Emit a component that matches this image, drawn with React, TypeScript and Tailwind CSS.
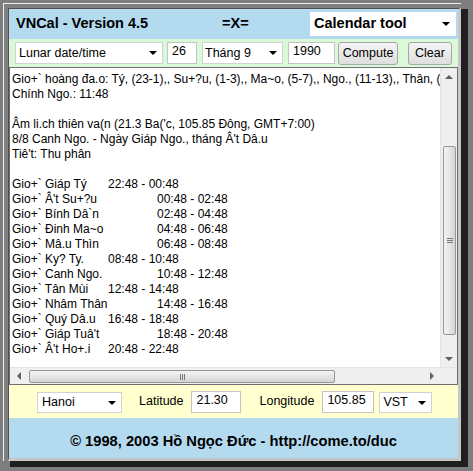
import React from 'react';

const FONT = "font-['Liberation_Sans',Arial,sans-serif]";

function DownArrow({ gray }: { gray?: boolean }) {
  return (
    <span
      className={`inline-block w-0 h-0 border-l-[4px] border-r-[4px] border-t-[4px] border-l-transparent border-r-transparent ${gray ? 'border-t-[#606060]' : 'border-t-black'}`}
    />
  );
}

function UpArrow() {
  return <span className="inline-block w-0 h-0 border-l-[4px] border-r-[4px] border-b-[4px] border-l-transparent border-r-transparent border-b-[#606060]" />;
}

function LeftArrow() {
  return <span className="inline-block w-0 h-0 border-t-[4px] border-b-[4px] border-r-[4px] border-t-transparent border-b-transparent border-r-[#606060]" />;
}

function RightArrow() {
  return <span className="inline-block w-0 h-0 border-t-[4px] border-b-[4px] border-l-[4px] border-t-transparent border-b-transparent border-l-[#606060]" />;
}

function Select({ label, className, textClass = '' }: { label: string; className: string; textClass?: string }) {
  return (
    <div className={`flex items-center justify-between bg-white border border-[#d2d2d2] ${className}`}>
      <span className={`whitespace-nowrap ${textClass}`}>{label}</span>
      <span className="flex items-center pr-[5px]">
        <DownArrow />
      </span>
    </div>
  );
}

function Input({ value, className }: { value: string; className: string }) {
  return (
    <div className={`bg-white border border-[#c4c4c4] pl-[4px] pt-[1px] leading-[15px] ${className}`}>{value}</div>
  );
}

function Button({ label, className }: { label: string; className: string }) {
  return (
    <div
      className={`flex items-center justify-center h-[23px] rounded-[3px] border border-[#a6a6a6] bg-gradient-to-b from-[#f4f4f4] to-[#dedede] text-[12.5px] ${className}`}
    >
      {label}
    </div>
  );
}

// text is in VIQR where the glyph is outside Latin-1, as in the original page
const intro = [
  'Gio+` hoàng đa.o: Tý, (23-1),, Su+?u, (1-3),, Ma~o, (5-7),, Ngo., (11-13),, Thân, (',
  'Chính Ngo.: 11:48',
  '',
  "Âm li.ch thiên va(n (21.3 Ba('c, 105.85 Đông, GMT+7:00)",
  "8/8 Canh Ngo. - Ngày Giáp Ngo., tháng Â't Dâ.u",
  "Tiê't: Thu phân",
  '',
];

const hours: [string, string, boolean][] = [
  ['Gio+` Giáp Tý', '22:48 - 00:48', false],
  ["Gio+` Â't Su+?u", '00:48 - 02:48', true],
  ['Gio+` Bính Dâ`n', '02:48 - 04:48', true],
  ['Gio+` Đinh Ma~o', '04:48 - 06:48', true],
  ['Gio+` Mâ.u Thìn', '06:48 - 08:48', true],
  ['Gio+` Ky? Ty.', '08:48 - 10:48', false],
  ['Gio+` Canh Ngo.', '10:48 - 12:48', true],
  ['Gio+` Tân Mùi', '12:48 - 14:48', false],
  ['Gio+` Nhâm Thân', '14:48 - 16:48', true],
  ['Gio+` Quý Dâ.u', '16:48 - 18:48', false],
  ["Gio+` Giáp Tuâ't", '18:48 - 20:48', true],
  ["Gio+` Â't Ho+.i", '20:48 - 22:48', false],
];

function TextArea() {
  return (
    <div className="h-[318px] border border-[#6f6f6f] bg-white flex flex-col">
      <div className="flex h-[299px]">
        <div className="w-[430px] overflow-hidden pl-[2px] pt-[4px] text-[12px] leading-[15px] text-black whitespace-pre">
          {intro.map((l, i) => (
            <div key={i} className="h-[15px]">
              {l}
            </div>
          ))}
          {hours.map(([name, time, long], i) => (
            <div key={i} className="h-[15px] flex">
              <span className={long ? 'w-[145px] shrink-0' : 'w-[96px] shrink-0'}>{name}</span>
              <span>{time}</span>
            </div>
          ))}
        </div>
        {/* vertical scrollbar */}
        <div className="w-[17px] flex flex-col bg-[#efefef] border-l border-[#e4e4e4]">
          <div className="h-[17px] flex items-center justify-center">
            <UpArrow />
          </div>
          <div className="flex-1 pl-[2px] pr-[1px]">
            <div className="mt-[61px] h-[189px] rounded-[2px] border border-[#969696] bg-gradient-to-r from-[#f3f3f3] via-[#e6e6e6] to-[#d4d4d4] flex flex-col items-center justify-center gap-[1px]">
              <span className="w-[6px] h-[1px] bg-[#777]" />
              <span className="w-[6px] h-[1px] bg-[#777]" />
              <span className="w-[6px] h-[1px] bg-[#777]" />
            </div>
          </div>
          <div className="h-[17px] flex items-center justify-center">
            <DownArrow gray />
          </div>
        </div>
      </div>
      {/* horizontal scrollbar */}
      <div className="h-[17px] flex bg-[#efefef] border-t border-[#e4e4e4]">
        <div className="w-[17px] flex items-center justify-center">
          <LeftArrow />
        </div>
        <div className="w-[396px] pt-[2px] pb-[1px]">
          <div className="ml-[2px] w-[306px] h-full rounded-[2px] border border-[#969696] bg-gradient-to-b from-[#f3f3f3] via-[#e6e6e6] to-[#d4d4d4] flex items-center justify-center gap-[1px]">
            <span className="w-[1px] h-[6px] bg-[#777]" />
            <span className="w-[1px] h-[6px] bg-[#777]" />
            <span className="w-[1px] h-[6px] bg-[#777]" />
          </div>
        </div>
        <div className="w-[17px] flex items-center justify-center">
          <RightArrow />
        </div>
        <div className="w-[17px] bg-[#efefef]" />
      </div>
    </div>
  );
}

export default function App() {
  return (
    <div className={`w-[473px] h-[471px] bg-[#7e7e7e] pl-[3px] pt-[3px] overflow-hidden ${FONT} text-black`}>
      <div className="w-[458px] h-[458px] border-l border-t border-[#f0f0f0] bg-[#808080] shadow-[7px_6px_0_#1f1f1f] pl-[4px] pt-[4px]">
        <div className="w-[453px] h-[453px] border-l border-t border-[#505050] border-r-[3px] border-b-[3px] border-r-[#c6c6c6] border-b-[#c6c6c6] flex flex-col">
          {/* title bar */}
          <div className="h-[30px] bg-[#b4daef] flex items-center pl-[7px]">
            <span className="w-[206px] font-bold text-[14.5px]">VNCal - Version 4.5</span>
            <span className="w-[88px] font-bold text-[14.5px]">=X=</span>
            <Select label="Calendar tool" className="w-[146px] h-[24px] pl-[3px] border-white" textClass="font-bold text-[14.5px]" />
          </div>
          {/* date row */}
          <div className="h-[28px] bg-[#d9f9d9] flex items-center pl-[6px] text-[12.5px]">
            <Select label="Lunar date/time" className="w-[148px] h-[22px] pl-[3px]" />
            <Input value="26" className="ml-[4px] w-[30px] h-[22px]" />
            <Select label="Tháng 9" className="ml-[5px] w-[81px] h-[22px] pl-[2px]" />
            <Input value="1990" className="ml-[5px] w-[47px] h-[22px]" />
            <Button label="Compute" className="ml-[3px] w-[60px]" />
            <Button label="Clear" className="ml-[10px] w-[44px]" />
          </div>
          <TextArea />
          {/* location row */}
          <div className="h-[33px] bg-[#ffffcf] flex items-center pl-[28px] text-[12.5px]">
            <Select label="Hanoi" className="w-[85px] h-[21px] pl-[4px] mt-[2px]" />
            <span className="ml-[17px]">Latitude</span>
            <Input value="21.30" className="ml-[8px] w-[50px] h-[22px]" />
            <span className="ml-[18px]">Longitude</span>
            <Input value="105.85" className="ml-[8px] w-[52px] h-[22px]" />
            <Select label="VST" className="ml-[5px] w-[53px] h-[21px] pl-[3px] mt-[2px]" />
          </div>
          {/* footer */}
          <div className="h-[40px] bg-[#b4daef] flex items-center justify-center pt-[6px] font-bold text-[14.7px]">
            © 1998, 2003 Hồ Ngọc Đức - http://come.to/duc
          </div>
        </div>
      </div>
    </div>
  );
}
